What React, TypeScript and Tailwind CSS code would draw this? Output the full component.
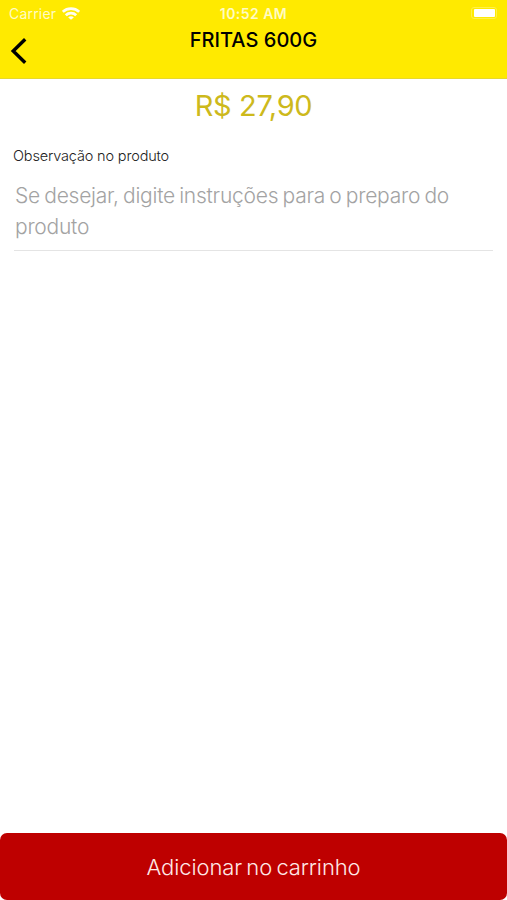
import { useState } from "react";

interface Produto {
  nome: string;
  preco: number;
}

const produto: Produto = { nome: "FRITAS 600G", preco: 27.9 };

function formatarPreco(valor: number) {
  return `R$ ${valor.toFixed(2).replace(".", ",")}`;
}

function StatusBar() {
  return (
    <div className="grid h-7 grid-cols-3 items-center pl-[9px] pr-[9px] text-[#fffbc4]">
      <div className="flex items-center gap-1.5">
        <span className="text-[14px] leading-none tracking-[0.2px]">Carrier</span>
        <svg width="18" height="13" viewBox="0 0 18 13" fill="none" stroke="#fffef0" strokeWidth="2.8" className="-mt-0.5">
          <path d="M.8 4.8C5.3 .6 12.7 .6 17.2 4.8" />
          <path d="M3.8 8.2C6.7 5.5 11.3 5.5 14.2 8.2" />
          <path d="M9 12.8L6.2 10.4C7.6 9 10.4 9 11.8 10.4Z" fill="#fffef0" stroke="none" />
        </svg>
      </div>
      <span className="text-center text-[14px] font-semibold leading-none tracking-[0.45px]">10:52 AM</span>
      <div className="flex justify-end pr-px">
        <div className="-mt-0.5 flex h-[12px] w-[26px] items-center justify-center rounded-[3px] border border-[#fff04a]">
          <div className="h-[8px] w-[21px] rounded-[1px] bg-white" />
        </div>
      </div>
    </div>
  );
}

export default function App() {
  const [observacao, setObservacao] = useState("");

  return (
    <div className="flex h-screen flex-col bg-white font-['Inter','Open_Sans',sans-serif]">
      <header className="h-[79px] border-b border-[#e6d82e] bg-[#ffea00]">
        <StatusBar />
        <div className="grid grid-cols-[40px_1fr_40px]">
          <button aria-label="Voltar" className="pl-[10px] pt-[9px]">
            <svg width="18" height="28" viewBox="0 0 18 28" fill="none" stroke="#000" strokeWidth="3.4">
              <path d="M15.2 2.2L3.2 14L15.2 25.8" />
            </svg>
          </button>
          <h1 className="text-center text-[20px] font-medium leading-6 tracking-[0.03px] text-black">{produto.nome}</h1>
        </div>
      </header>
      <main className="flex flex-1 flex-col">
        <p className="mt-[9px] text-center text-[29px] leading-9 tracking-[-0.35px] text-[#cdb91c]">
          {formatarPreco(produto.preco)}
        </p>
        <label htmlFor="observacao" className="ml-[13px] mt-[22px] text-[14.5px] font-light leading-5 tracking-[-0.16px] text-[#222]">
          Observação no produto
        </label>
        <textarea
          id="observacao"
          rows={2}
          value={observacao}
          onChange={(e) => setObservacao(e.target.value)}
          placeholder="Se desejar, digite instruções para o preparo do produto"
          className="mx-[14px] mt-[15px] block h-[70px] resize-none border-b border-[#e4e4e4] pl-px text-[21px] font-light leading-[30.5px] tracking-[-0.24px] [word-spacing:-1.4px] text-[#222] outline-none placeholder:text-[#a3a3a3]"
        />
      </main>
      <button className="h-[67px] rounded-[7px] bg-[#be0000] pt-0.5 text-[22px] font-light tracking-[-0.1px] [word-spacing:-1.8px] text-[#ffe9e7]">
        Adicionar no carrinho
      </button>
    </div>
  );
}
